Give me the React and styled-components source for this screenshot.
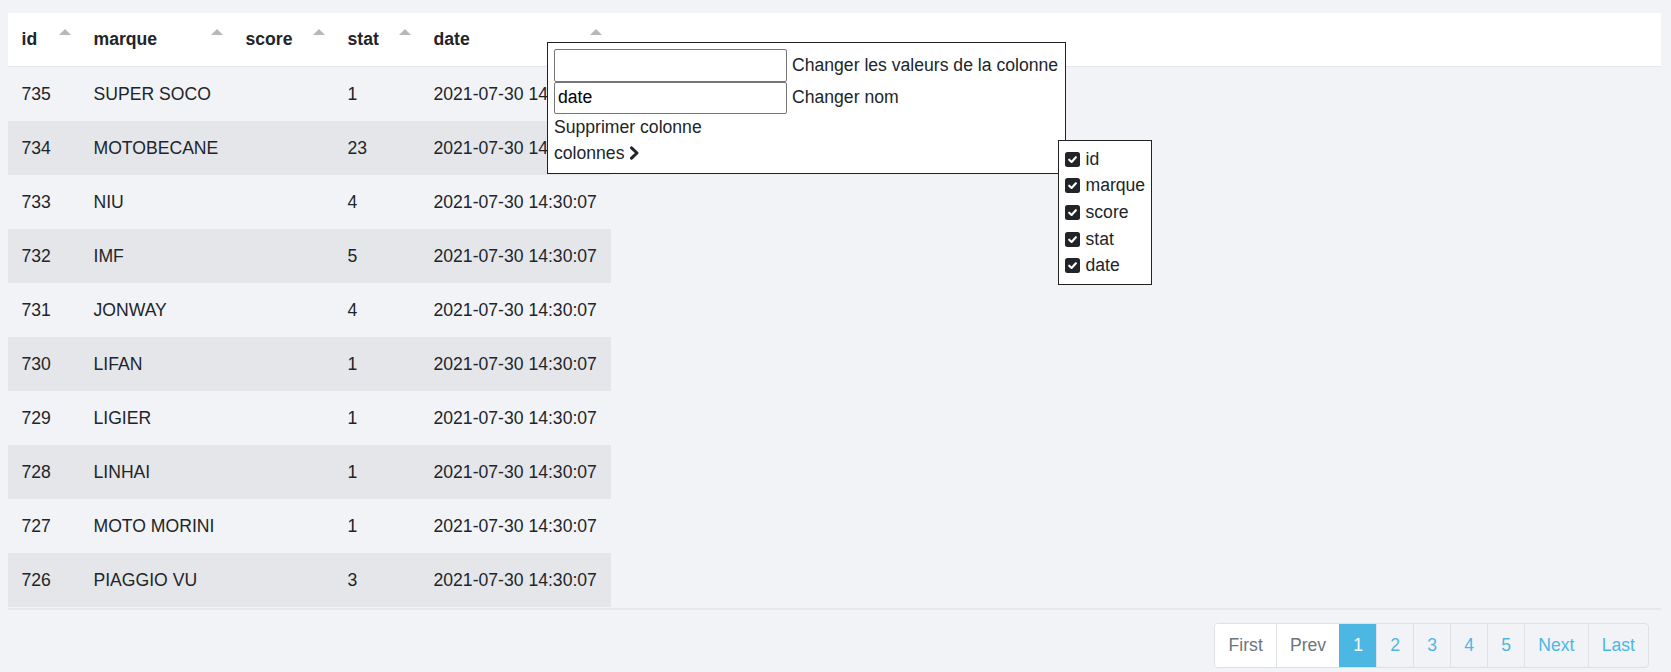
import React from 'react'
import styled, { createGlobalStyle } from 'styled-components'

const GlobalStyle = createGlobalStyle`
  html, body {
    margin: 0;
    padding: 0;
    background: #f2f3f7;
  }
  body {
    font-family: "Liberation Sans", Arial, sans-serif;
    font-size: 17.6px;
    color: #212529;
  }
`

const columns = [
  { key: 'id', w: 72 },
  { key: 'marque', w: 152 },
  { key: 'score', w: 102 },
  { key: 'stat', w: 86 },
  { key: 'date', w: 191 },
]

const rows = [
  { id: 735, marque: 'SUPER SOCO', stat: 1 },
  { id: 734, marque: 'MOTOBECANE', stat: 23 },
  { id: 733, marque: 'NIU', stat: 4 },
  { id: 732, marque: 'IMF', stat: 5 },
  { id: 731, marque: 'JONWAY', stat: 4 },
  { id: 730, marque: 'LIFAN', stat: 1 },
  { id: 729, marque: 'LIGIER', stat: 1 },
  { id: 728, marque: 'LINHAI', stat: 1 },
  { id: 727, marque: 'MOTO MORINI', stat: 1 },
  { id: 726, marque: 'PIAGGIO VU', stat: 3 },
]

const pages = [
  { label: 'First', kind: 'off' },
  { label: 'Prev', kind: 'off' },
  { label: '1', kind: 'active' },
  { label: '2' },
  { label: '3' },
  { label: '4' },
  { label: '5' },
  { label: 'Next' },
  { label: 'Last' },
]

const Check = () => (
  <CheckBox>
    <svg width="11" height="11" viewBox="0 0 12 12">
      <polyline points="2.4,6.2 5,8.7 9.7,3.5" fill="none" stroke="#fff" strokeWidth="2.3" strokeLinecap="round" strokeLinejoin="round" />
    </svg>
  </CheckBox>
)

const App = () => {
  return (
    <Page>
      <GlobalStyle />
      <TableWrap>
        <HeadRow>
          {columns.map(c => (
            <HeadCell key={c.key} $w={c.w}>
              {c.key}
              <Caret />
            </HeadCell>
          ))}
        </HeadRow>
        {rows.map((r, i) => (
          <Row key={r.id} $striped={i % 2 === 1}>
            <Cell $w={72}>{r.id}</Cell>
            <Cell $w={152}>{r.marque}</Cell>
            <Cell $w={102}></Cell>
            <Cell $w={86}>{r.stat}</Cell>
            <Cell $w={191}>2021-07-30 14:30:07</Cell>
          </Row>
        ))}
        <BottomLine />

        {/* column menu, opened over the date header */}
        <Popup>
          <FieldRow>
            <Field type="text" defaultValue="" />
            <span>Changer les valeurs de la colonne</span>
          </FieldRow>
          <FieldRow>
            <Field type="text" defaultValue="date" />
            <span>Changer nom</span>
          </FieldRow>
          <MenuLine>Supprimer colonne</MenuLine>
          <MenuLine>
            colonnes
            <svg width="11" height="14" viewBox="0 0 11 14">
              <polyline points="2.5,1.8 8,7 2.5,12.2" fill="none" stroke="#212529" strokeWidth="3" strokeLinecap="round" strokeLinejoin="round" />
            </svg>
          </MenuLine>
          <SubMenu>
            {columns.map(c => (
              <SubItem key={c.key}>
                <Check />
                {c.key}
              </SubItem>
            ))}
          </SubMenu>
        </Popup>
      </TableWrap>

      <PagerBar>
        <Pager>
          {pages.map(p => (
            <PageBtn key={p.label} $kind={p.kind}>{p.label}</PageBtn>
          ))}
        </Pager>
      </PagerBar>
    </Page>
  )
}

const Page = styled.div`
  padding: 13px 10px 0 8px;
  min-height: 100vh;
  box-sizing: border-box;
`

const TableWrap = styled.div`
  position: relative;
`

const HeadRow = styled.div`
  display: flex;
  height: 53px;
  background: #fff;
  border-bottom: 1px solid #e6e7eb;
`

const HeadCell = styled.div`
  position: relative;
  width: ${p => p.$w}px;
  box-sizing: border-box;
  padding: 0 13.5px;
  display: flex;
  align-items: center;
  font-weight: bold;
`

const Caret = styled.span`
  position: absolute;
  right: 9px;
  top: 16px;
  width: 0;
  height: 0;
  border-left: 6.5px solid transparent;
  border-right: 6.5px solid transparent;
  border-bottom: 6px solid #b8b8bb;
`

const Row = styled.div`
  display: flex;
  width: 603px;
  height: 54px;
  background: ${p => (p.$striped ? '#e5e6ea' : 'transparent')};
`

const Cell = styled.div`
  width: ${p => p.$w}px;
  box-sizing: border-box;
  padding: 0 13.5px;
  display: flex;
  align-items: center;
  white-space: nowrap;
  overflow: hidden;
`

const BottomLine = styled.div`
  height: 2px;
  margin-top: 1px;
  background: #e7e8ec;
`

const Popup = styled.div`
  position: absolute;
  left: 539px;
  top: 29px;
  width: 519px;
  height: 132px;
  box-sizing: border-box;
  padding: 6px;
  background: #fff;
  border: 1px solid #222;
  color: #212529;
`

const FieldRow = styled.div`
  display: flex;
  align-items: center;
  gap: 5px;
  height: 32.5px;
  white-space: nowrap;
`

const Field = styled.input`
  width: 233px;
  height: 32.5px;
  box-sizing: border-box;
  margin: 0;
  padding: 1px 3px;
  border: 1px solid #767676;
  border-radius: 2px;
  background: #fff;
  font-family: "Liberation Sans", Arial, sans-serif;
  font-size: 17.6px;
  color: #000;
  outline: none;
`

const MenuLine = styled.div`
  display: flex;
  align-items: center;
  gap: 5px;
  height: 26.3px;
`

const SubMenu = styled.div`
  position: absolute;
  left: 510px;
  top: 97px;
  width: 94px;
  box-sizing: border-box;
  padding: 5px 6px;
  background: #fff;
  border: 1px solid #222;
  z-index: 2;
`

const SubItem = styled.div`
  display: flex;
  align-items: center;
  gap: 5.5px;
  height: 26.6px;
`

const CheckBox = styled.span`
  display: inline-flex;
  align-items: center;
  justify-content: center;
  width: 15px;
  height: 15px;
  border-radius: 2.5px;
  background: #212529;
  flex-shrink: 0;
`

const PagerBar = styled.div`
  display: flex;
  justify-content: flex-end;
  padding: 13px 12px 0 0;
`

const Pager = styled.div`
  display: flex;
  height: 45px;
  border: 1px solid #dde0e5;
  border-radius: 4px;
  overflow: hidden;
  box-sizing: border-box;
`

const PageBtn = styled.span`
  display: flex;
  align-items: center;
  padding: 0 13.1px;
  border-left: 1px solid #dde0e5;
  background: ${p => (p.$kind === 'active' ? '#4db7e3' : p.$kind === 'off' ? '#fff' : 'transparent')};
  color: ${p => (p.$kind === 'active' ? '#fff' : p.$kind === 'off' ? '#6c757d' : '#4db7e3')};
  border-color: ${p => (p.$kind === 'active' ? '#4db7e3' : '#dde0e5')};
  &:first-child {
    border-left: none;
  }
`

export default App
